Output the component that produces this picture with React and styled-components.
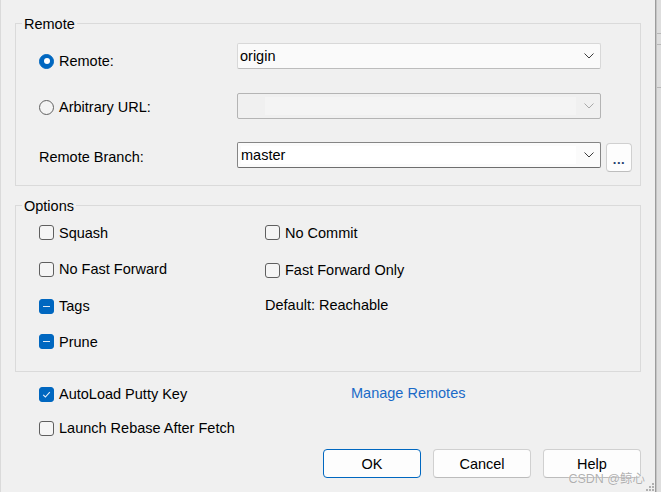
import React from 'react';
import styled, { createGlobalStyle } from 'styled-components';

const Global = createGlobalStyle`
  html, body { margin: 0; padding: 0; background: #f0f0f0; }
  body {
    font-family: "Liberation Sans", Arial, sans-serif;
    font-size: 14.5px;
    color: #000;
  }
  #root { width: 661px; height: 492px; overflow: hidden; }
`;

const Window = styled.div`
  position: relative;
  display: flex;
  width: 661px;
  height: 492px;
  background: #f0f0f0;
  overflow: hidden;
`;

const Dialog = styled.div`
  flex: 0 0 655px;
  box-sizing: border-box;
  padding: 13px 14px 0 14px;
  border-left: 1px solid #dadada;
  display: flex;
  flex-direction: column;
`;

const EdgeStrip = styled.div`
  flex: 0 0 6px;
  box-sizing: border-box;
  border-left: 1px solid #9c9c9c;
  box-shadow: inset 1px 0 0 #c4c4c4;
  background:
    linear-gradient(#b8b8b8, #b8b8b8) 0 33px / 100% 1px no-repeat,
    linear-gradient(#b8b8b8, #b8b8b8) 0 44px / 100% 1px no-repeat,
    linear-gradient(#b8b8b8, #b8b8b8) 0 87px / 100% 1px no-repeat,
    #dedede;
`;

const Group = styled.fieldset`
  margin: ${p => p.$top || 0}px 0 0 0;
  padding: 0;
  min-width: 0;
  border: 1px solid #dadada;
`;

const Legend = styled.legend`
  margin-left: 6px;
  padding: 0 2px;
  line-height: 20px;
  font-size: 14.5px;
  position: relative;
  top: 1px;
`;

const RemoteBody = styled.div`
  padding: 10px 0 13px 23px;
`;

const FieldRow = styled.div`
  display: grid;
  grid-template-columns: 193px 364px 26px;
  column-gap: 5px;
  align-items: start;
  height: ${p => p.$h || 26}px;
  margin-top: ${p => p.$top || 0}px;
`;

const LabelCell = styled.div`
  display: flex;
  align-items: center;
  gap: 5px;
  line-height: 20px;
  padding-top: ${p => p.$pt || 0}px;
  white-space: nowrap;
`;

const Radio = styled.span`
  box-sizing: border-box;
  width: 15px;
  height: 15px;
  border-radius: 50%;
  flex: 0 0 15px;
  display: flex;
  align-items: center;
  justify-content: center;
  background: ${p => (p.$on ? '#0067c0' : '#f4f4f4')};
  border: 1px solid ${p => (p.$on ? '#0067c0' : '#616161')};
  &::after {
    content: '';
    display: ${p => (p.$on ? 'block' : 'none')};
    width: 6px;
    height: 6px;
    border-radius: 50%;
    background: #fff;
  }
`;

const comboBorders = {
  normal: { bg: '#fafafa', b: '#d8d8d8', bb: '#bcbcbc' },
  disabled: { bg: '#f0f0f0', b: '#b4b4b4', bb: '#b4b4b4' },
  edit: { bg: '#fbfbfb', b: '#858585', bb: '#6e6e6e' },
};

const Combo = styled.div`
  box-sizing: border-box;
  height: 26px;
  display: flex;
  align-items: stretch;
  border: 1px solid ${p => comboBorders[p.$variant].b};
  border-bottom-color: ${p => comboBorders[p.$variant].bb};
  border-radius: 2px;
  background: ${p => comboBorders[p.$variant].bg};
`;

const ComboField = styled.div`
  flex: 1;
  display: flex;
  align-items: center;
  padding-left: ${p => p.$pl ?? 2}px;
  margin: ${p => (p.$inset ? '3px 0 3px 3px' : '0')};
  margin-left: ${p => p.$ml ?? (p.$inset ? 3 : 0)}px;
  background: ${p => p.$fill || 'transparent'};
  line-height: 20px;
  white-space: nowrap;
`;

const ChevronBox = styled.div`
  flex: 0 0 23px;
  display: flex;
  align-items: center;
  justify-content: center;
  padding-left: 1px;
`;

const Chevron = ({ color = '#3c3c3c' }) => (
  <svg width="10" height="6" viewBox="0 0 10 6">
    <path d="M0.5 0.5 L5 5 L9.5 0.5" fill="none" stroke={color} strokeWidth="1" />
  </svg>
);

const EllipsisButton = styled.div`
  box-sizing: border-box;
  width: 26px;
  height: 29px;
  margin-top: 1px;
  border: 1px solid #d0d0d0;
  border-bottom-color: #bdbdbd;
  border-radius: 4px;
  background: #fdfdfd;
  display: flex;
  align-items: center;
  justify-content: center;
  padding-top: 4px;
  font-size: 13px;
  font-weight: bold;
  letter-spacing: 0.5px;
  color: #1d3f6e;
`;

const OptionsBody = styled.div`
  display: grid;
  grid-template-columns: 226px auto;
  grid-auto-rows: 36px;
  align-items: center;
  padding: 0 0 12px 23px;
`;

const CheckItem = styled.div`
  display: flex;
  align-items: center;
  gap: 5px;
  line-height: 20px;
  white-space: nowrap;
  margin-top: ${p => p.$dy || 0}px;
`;

const Box = styled.span`
  box-sizing: border-box;
  width: 15px;
  height: 15px;
  flex: 0 0 15px;
  border-radius: 3px;
  display: flex;
  align-items: center;
  justify-content: center;
  background: ${p => (p.$state === 'off' ? '#f5f5f5' : '#0067c0')};
  border: 1px solid ${p => (p.$state === 'off' ? '#5f5f5f' : '#0067c0')};
`;

const Dash = styled.span`
  width: 7px;
  height: 1px;
  background: #dfe9f5;
`;

const Check = () => (
  <svg width="11" height="11" viewBox="0 0 11 11">
    <path d="M2.2 5.8 L4.4 8 L8.8 3.2" fill="none" stroke="#e8f0fa" strokeWidth="1.1" />
  </svg>
);

const Plain = styled.div`
  line-height: 20px;
  white-space: nowrap;
  margin-top: ${p => p.$dy || 0}px;
`;

const BottomGrid = styled.div`
  display: grid;
  grid-template-columns: 312px auto;
  grid-auto-rows: 34px;
  align-items: center;
  margin-top: 5px;
  padding-left: 24px;
`;

const Link = styled.span`
  color: #1a6ac7;
  line-height: 20px;
  margin-top: -3px;
  cursor: pointer;
`;

const ButtonRow = styled.div`
  display: flex;
  justify-content: flex-end;
  gap: 12px;
  margin-top: 4px;
`;

const Button = styled.button`
  box-sizing: border-box;
  width: 98px;
  height: 29px;
  padding: 0;
  font-family: "Liberation Sans", Arial, sans-serif;
  font-size: 14.5px;
  color: #000;
  background: #fdfdfd;
  border: 1px solid ${p => (p.$primary ? '#0067c0' : '#d0d0d0')};
  border-bottom-color: ${p => (p.$primary ? '#0067c0' : '#bcbcbc')};
  border-radius: 4px;
`;

const Watermark = styled.div`
  position: absolute;
  right: 16px;
  bottom: 6px;
  font-family: "Liberation Sans", "Noto Sans CJK SC", sans-serif;
  font-size: 12.5px;
  line-height: 14px;
  color: rgba(150, 150, 150, 0.75);
  text-shadow: 0 0 1px #fff;
  pointer-events: none;
`;

const Grip = styled.svg`
  position: absolute;
  right: 6px;
  bottom: 0px;
`;

export default function App() {
  return (
    <>
      <Global />
      <Window>
        <Dialog>
          <Group>
            <Legend>Remote</Legend>
            <RemoteBody>
              <FieldRow>
                <LabelCell $pt={8}>
                  <Radio $on />
                  <span>Remote:</span>
                </LabelCell>
                <Combo $variant="normal">
                  <ComboField>origin</ComboField>
                  <ChevronBox><Chevron /></ChevronBox>
                </Combo>
              </FieldRow>
              <FieldRow $top={24}>
                <LabelCell $pt={4}>
                  <Radio />
                  <span>Arbitrary URL:</span>
                </LabelCell>
                <Combo $variant="disabled">
                  <ComboField $inset $ml={27} $fill="#f4f4f4" />
                  <ChevronBox><Chevron color="#a8a8a8" /></ChevronBox>
                </Combo>
              </FieldRow>
              <FieldRow $top={23} $h={30}>
                <LabelCell $pt={5}>
                  <span>Remote Branch:</span>
                </LabelCell>
                <Combo $variant="edit">
                  <ComboField $inset $pl={0} $fill="#ffffff">master</ComboField>
                  <ChevronBox><Chevron /></ChevronBox>
                </Combo>
                <EllipsisButton>...</EllipsisButton>
              </FieldRow>
            </RemoteBody>
          </Group>

          <Group $top={9}>
            <Legend>Options</Legend>
            <OptionsBody>
              <CheckItem $dy={-1}><Box $state="off" /><span>Squash</span></CheckItem>
              <CheckItem $dy={-1}><Box $state="off" /><span>No Commit</span></CheckItem>
              <CheckItem><Box $state="off" /><span>No Fast Forward</span></CheckItem>
              <CheckItem $dy={2}><Box $state="off" /><span>Fast Forward Only</span></CheckItem>
              <CheckItem $dy={2}><Box $state="mixed"><Dash /></Box><span>Tags</span></CheckItem>
              <Plain $dy={-1}>Default: Reachable</Plain>
              <CheckItem $dy={1}><Box $state="mixed"><Dash /></Box><span>Prune</span></CheckItem>
            </OptionsBody>
          </Group>

          <BottomGrid>
            <CheckItem><Box $state="on"><Check /></Box><span>AutoLoad Putty Key</span></CheckItem>
            <Link>Manage Remotes</Link>
            <CheckItem><Box $state="off" /><span>Launch Rebase After Fetch</span></CheckItem>
          </BottomGrid>

          <ButtonRow>
            <Button $primary>OK</Button>
            <Button>Cancel</Button>
            <Button>Help</Button>
          </ButtonRow>
        </Dialog>
        <EdgeStrip />
        <Watermark>CSDN @鲸心</Watermark>
        <Grip width="9" height="9" viewBox="0 0 9 9">
          <rect x="6" y="0" width="2" height="2" fill="#b0b0b0" />
          <rect x="3" y="3" width="2" height="2" fill="#b0b0b0" />
          <rect x="6" y="3" width="2" height="2" fill="#b0b0b0" />
          <rect x="0" y="6" width="2" height="2" fill="#b0b0b0" />
          <rect x="3" y="6" width="2" height="2" fill="#b0b0b0" />
          <rect x="6" y="6" width="2" height="2" fill="#b0b0b0" />
        </Grip>
      </Window>
    </>
  );
}
